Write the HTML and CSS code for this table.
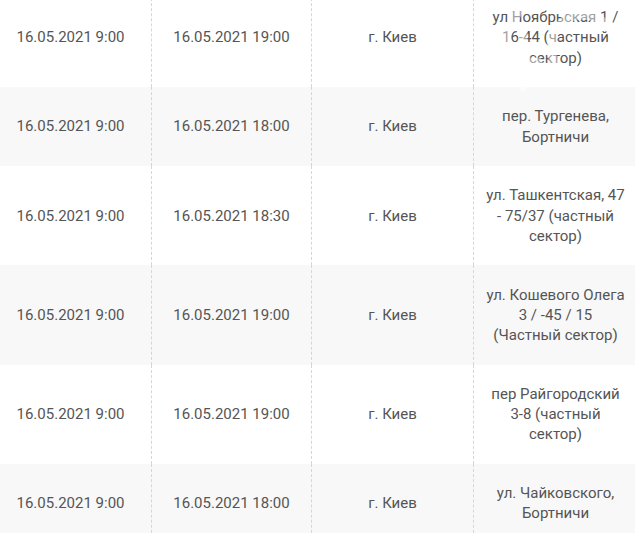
FILE: index.html
```html
<!DOCTYPE html>
<html lang="ru">
<head>
<meta charset="utf-8">
<link rel="stylesheet" href="styles.css">
</head>
<body>
<div class="wrap">
<table class="schedule">
  <colgroup>
    <col class="c1"><col class="c2"><col class="c3"><col class="c4">
  </colgroup>
  <tbody>
    <tr>
      <td>16.05.2021 9:00</td><td>16.05.2021 19:00</td><td>г. Киев</td>
      <td class="addr">ул Ноябрьская 1 / 16-44 (частный сектор)</td>
    </tr>
    <tr>
      <td>16.05.2021 9:00</td><td>16.05.2021 18:00</td><td>г. Киев</td>
      <td class="addr">пер. Тургенева, Бортничи</td>
    </tr>
    <tr>
      <td>16.05.2021 9:00</td><td>16.05.2021 18:30</td><td>г. Киев</td>
      <td class="addr">ул. Ташкентская, 47 - 75/37 (частный сектор)</td>
    </tr>
    <tr>
      <td>16.05.2021 9:00</td><td>16.05.2021 19:00</td><td>г. Киев</td>
      <td class="addr">ул. Кошевого Олега 3 / -45 / 15 (Частный сектор)</td>
    </tr>
    <tr>
      <td>16.05.2021 9:00</td><td>16.05.2021 19:00</td><td>г. Киев</td>
      <td class="addr">пер Райгородский 3-8 (частный сектор)</td>
    </tr>
    <tr>
      <td>16.05.2021 9:00</td><td>16.05.2021 18:00</td><td>г. Киев</td>
      <td class="addr">ул. Чайковского, Бортничи</td>
    </tr>
  </tbody>
</table>
<svg class="watermark" width="170" height="110" viewBox="0 0 170 110" aria-hidden="true">
  <g fill="none" stroke="#fff" stroke-width="9" stroke-linecap="round">
    <path d="M40 20 L15 70 L60 70"/>
    <path d="M45 40 L45 95"/>
    <circle cx="105" cy="55" r="32"/>
  </g>
</svg>
</div>
</body>
</html>
```
FILE: styles.css
```css
html, body {
  margin: 0;
  padding: 0;
  background: #fff;
  overflow: hidden;
}
.wrap {
  position: relative;
  width: 635px;
  height: 533px;
  overflow: hidden;
}
.schedule {
  margin-left: -10px;
  margin-top: -12.25px;
  border-collapse: separate;
  border-spacing: 0;
  table-layout: fixed;
  width: 647px;
  font-family: Roboto, "Liberation Sans", sans-serif;
  font-size: 15px;
  line-height: 20.25px;
  color: #555;
}
.c1 { width: 162px; }
.c2 { width: 160px; }
.c3 { width: 162px; }
.c4 { width: 163px; }
.schedule td {
  padding: 19.25px 10px;
  text-align: center;
  vertical-align: middle;
  border-right: 1px dashed #d6d6d6;
}
.schedule td:last-child {
  border-right: none;
}
.schedule tr:nth-child(even) td {
  background: #f8f8f8;
}
.watermark {
  position: absolute;
  left: 478px;
  top: -8px;
  opacity: 0.45;
  pointer-events: none;
}
```
